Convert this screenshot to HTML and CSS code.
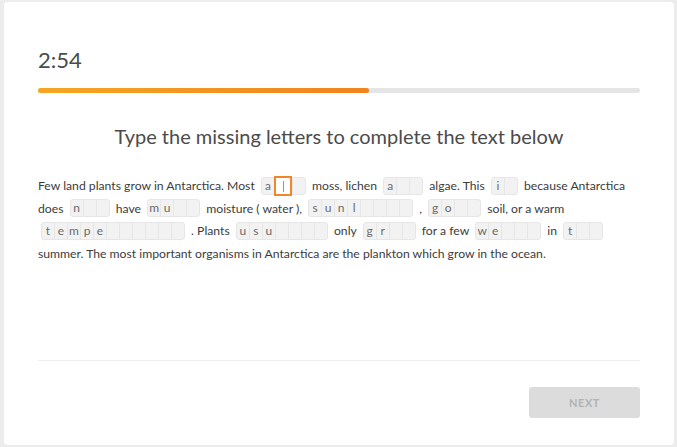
FILE: index.html
```html
<!DOCTYPE html>
<html lang="en">
<head>
    <meta charset="UTF-8">
    <meta name="viewport" content="width=device-width, initial-scale=1.0">
    <title>Missing letters</title>
    <link rel="stylesheet" href="styles.css">
</head>
<body>

    <div class="card">
        <div class="timer">2:54</div>

        <!-- Полоса оставшегося времени -->
        <div class="progress"><div class="progress-fill"></div></div>

        <h1>Type the missing letters to complete the text below</h1>

        <p class="passage">Few land plants grow in Antarctica. Most <span class="gap"><span class="cell">a</span><span class="cell active"></span><span class="cell"></span></span> moss, lichen <span class="gap"><span class="cell">a</span><span class="cell"></span><span class="cell"></span></span> algae. This <span class="gap"><span class="cell">i</span><span class="cell"></span></span> because Antarctica does <span class="gap"><span class="cell">n</span><span class="cell"></span><span class="cell"></span></span> have <span class="gap"><span class="cell">m</span><span class="cell">u</span><span class="cell"></span><span class="cell"></span></span> moisture ( water ), <span class="gap"><span class="cell">s</span><span class="cell">u</span><span class="cell">n</span><span class="cell">l</span><span class="cell"></span><span class="cell"></span><span class="cell"></span><span class="cell"></span></span> , <span class="gap"><span class="cell">g</span><span class="cell">o</span><span class="cell"></span><span class="cell"></span></span> soil, or a warm <span class="gap"><span class="cell">t</span><span class="cell">e</span><span class="cell">m</span><span class="cell">p</span><span class="cell">e</span><span class="cell"></span><span class="cell"></span><span class="cell"></span><span class="cell"></span><span class="cell"></span><span class="cell"></span></span> . Plants <span class="gap"><span class="cell">u</span><span class="cell">s</span><span class="cell">u</span><span class="cell"></span><span class="cell"></span><span class="cell"></span><span class="cell"></span></span> only <span class="gap"><span class="cell">g</span><span class="cell">r</span><span class="cell"></span><span class="cell"></span></span> for a few <span class="gap"><span class="cell">w</span><span class="cell">e</span><span class="cell"></span><span class="cell"></span><span class="cell"></span></span> in <span class="gap"><span class="cell">t</span><span class="cell"></span><span class="cell"></span></span> summer. The most important organisms in Antarctica are the plankton which grow in the ocean.</p>

        <div class="footer">
            <button class="next" disabled>NEXT</button>
        </div>
    </div>

</body>
</html>
```

FILE: styles.css
```css
body {
    font-family: 'Lato', 'Open Sans', sans-serif;
    margin: 0;
    padding: 2px 3px 2px 4px;
    background: #ececec;
    color: #3c3c3c;
}

.card {
    background: #fff;
    border-radius: 4px;
    height: 443px;
    box-sizing: border-box;
    padding: 45px 34px 27px 34px;
    display: flex;
    flex-direction: column;
}

.timer {
    font-size: 22px;
    line-height: 26px;
    color: #4b4b4b;
}

.progress {
    margin-top: 15px;
    height: 5px;
    border-radius: 3px;
    background: #e5e5e5;
}

.progress-fill {
    width: 55%;
    height: 100%;
    border-radius: 3px;
    background: linear-gradient(90deg, #f5a623, #f0831f);
}

h1 {
    margin: 30px 0 0;
    font-size: 20px;
    line-height: 26px;
    font-weight: normal;
    text-align: center;
    color: #4b4b4b;
}

.passage {
    flex: 1;
    margin: 26px 0 0;
    font-size: 12.2px;
    line-height: 22.5px;
    color: #3c3c3c;
}

/* Поле с буквами */
.gap {
    display: inline-flex;
    vertical-align: middle;
    margin: -2px 3px 0;
    border: 1px solid #e6e6e6;
    border-radius: 3px;
    background: #f2f2f2;
}

.cell {
    position: relative;
    width: 12px;
    height: 16px;
    line-height: 16px;
    font-size: 12px;
    text-align: center;
    color: #6b6b6b;
    border-left: 1px solid #e6e6e6;
}

.cell:first-child {
    border-left: none;
}

.cell.active {
    width: 14px;
    margin: -2px 0;
    height: 16px;
    border: 2px solid #f0882a;
    background: #fff;
}

.cell.active::after {
    content: '';
    position: absolute;
    left: 7px;
    top: 3px;
    width: 1px;
    height: 11px;
    background: #e0803a;
}

.footer {
    border-top: 1px solid #eee;
    padding-top: 26px;
    display: flex;
    justify-content: flex-end;
}

.next {
    width: 111px;
    height: 31px;
    border: none;
    border-radius: 3px;
    background: #dcdcdc;
    color: #b3b3b3;
    font-family: 'Lato', sans-serif;
    font-size: 11px;
    font-weight: bold;
    letter-spacing: 0.5px;
}
```
